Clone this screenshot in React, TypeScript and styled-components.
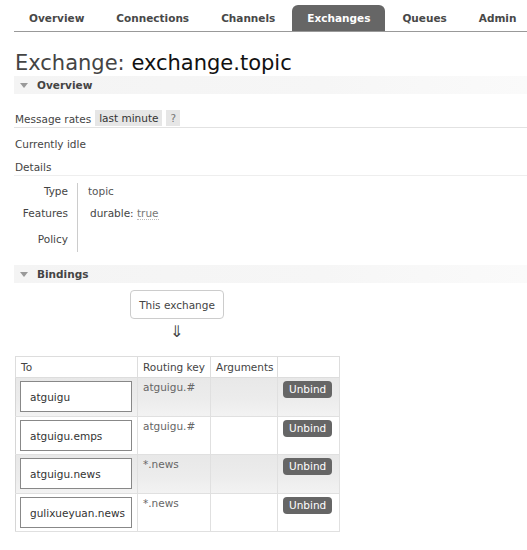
import React, { FC } from 'react';
import styled, { createGlobalStyle } from 'styled-components';

const GlobalStyle = createGlobalStyle`
    html, body {
        margin: 0;
        padding: 0;
        background: #fff;
    }
    body {
        font-family: Verdana, 'DejaVu Sans', sans-serif;
        font-size: 10.5px;
        color: #444;
    }
`;

const Page = styled.div`
    width: 527px;
    padding-left: 14px;
    box-sizing: border-box;
`;

const Nav = styled.ul`
    display: flex;
    gap: 2px;
    margin: 0;
    padding: 5px 0 0 0;
    list-style: none;
    border-bottom: 1px solid #999;
`;

const NavItem = styled.li<{ $active?: boolean }>`
    height: 26px;
    line-height: 27px;
    padding: 0 15px;
    font-weight: bold;
    white-space: nowrap;
    color: ${(p) => (p.$active ? '#fff' : '#484848')};
    background: ${(p) => (p.$active ? '#666' : 'transparent')};
    border-radius: 6px 6px 0 0;
`;

const Title = styled.h1`
    margin: 19px 0 0 1px;
    font-size: 21px;
    font-weight: normal;
    line-height: 25px;
    color: #444;
    & span {
        color: #111;
    }
`;

const SectionHeader = styled.h2<{ $top?: number }>`
    display: flex;
    align-items: center;
    height: 18px;
    margin: ${(p) => p.$top ?? 0}px 0 0 0;
    padding-left: 6px;
    font-size: 10.5px;
    font-weight: bold;
    color: #444;
    background: linear-gradient(to right, #f4f4f4 0%, #f6f6f6 60%, #fafafa 100%);
`;

const Triangle = styled.span`
    width: 0;
    height: 0;
    margin-right: 9px;
    border-left: 4px solid transparent;
    border-right: 4px solid transparent;
    border-top: 5px solid #999;
`;

const RateRow = styled.div`
    display: flex;
    align-items: center;
    gap: 4px;
    margin-top: 16px;
    padding-left: 1px;
    height: 17px;
    border-bottom: 1px solid #e2e2e2;
`;

const Pill = styled.span<{ $muted?: boolean }>`
    display: inline-block;
    height: 16px;
    line-height: 17px;
    padding: 0 4px;
    margin-top: -1px;
    background: #e6e6e6;
    color: ${(p) => (p.$muted ? '#777' : '#333')};
`;

const Line = styled.p`
    margin: 10px 0 0 1px;
    line-height: 13px;
`;

const SubHeading = styled.p`
    margin: 10px 0 0 0;
    padding: 0 0 1px 1px;
    line-height: 13px;
    border-bottom: 1px solid #eee;
`;

const DetailsTable = styled.table`
    margin-top: 7px;
    border-collapse: collapse;
    line-height: 13px;
`;

const DetailLabel = styled.th<{ $h: number }>`
    width: 54px;
    height: ${(p) => p.$h}px;
    padding: 0 9px 0 0;
    text-align: right;
    vertical-align: middle;
    font-weight: normal;
    color: #444;
`;

const DetailValue = styled.td`
    border-left: 1px solid #ccc;
    padding: 0 0 0 10px;
    color: #555;
`;

const FeatureName = styled.span`
    margin-left: 2px;
    color: #444;
`;

const Dotted = styled.span`
    color: #777;
    border-bottom: 1px dotted #bbb;
`;

const Flow = styled.div`
    display: flex;
    flex-direction: column;
    align-items: flex-start;
    padding-left: 116px;
    margin-top: 7px;
`;

const ExchangeBox = styled.div`
    width: 92px;
    height: 27px;
    line-height: 28px;
    text-align: center;
    border: 1px solid #ccc;
    border-radius: 4px;
    color: #444;
`;

const Arrow = styled.div`
    margin: 3px 0 0 40px;
    font-size: 16px;
    line-height: 20px;
    color: #444;
`;

const Bindings = styled.table`
    margin: 14px 0 0 1px;
    border-collapse: collapse;
    border: 1px solid #d6d6d6;
    width: 325px;
    table-layout: fixed;
`;

const HeadCell = styled.th`
    height: 20px;
    padding: 0 5px;
    text-align: left;
    font-weight: normal;
    color: #444;
    border: 1px solid #ddd;
    background: #fff;
`;

const Row = styled.tr<{ $alt: boolean }>`
    height: 38.5px;
    background: ${(p) => (p.$alt ? 'linear-gradient(to bottom, #e8e8e8 0%, #ececec 55%, #f3f3f3 100%)' : '#fff')};
`;

const Cell = styled.td`
    padding: 3px 4px 0 5px;
    vertical-align: top;
    border-left: 1px solid #e0e0e0;
    border-right: 1px solid #e0e0e0;
    border-bottom: 1px solid #e0e0e0;
    color: #666;
`;

const EndpointCell = styled.td`
    padding: 3px 0 3px 4px;
    vertical-align: top;
    border-bottom: 1px solid #e0e0e0;
`;

const Endpoint = styled.div`
    box-sizing: border-box;
    width: 112px;
    height: 31px;
    line-height: 31px;
    padding-left: 9px;
    border: 1px solid #888;
    background: #fff;
    color: #333;
    white-space: nowrap;
`;

const UnbindButton = styled.button`
    height: 17px;
    padding: 0 6px;
    margin: 0;
    border: none;
    border-radius: 4px;
    background: #666;
    color: #fff;
    font-family: inherit;
    font-size: 10.5px;
    line-height: 17px;
`;

type Binding = { to: string; key: string };

const bindings: Binding[] = [
    { to: 'atguigu', key: 'atguigu.#' },
    { to: 'atguigu.emps', key: 'atguigu.#' },
    { to: 'atguigu.news', key: '*.news' },
    { to: 'gulixueyuan.news', key: '*.news' },
];

const tabs = ['Overview', 'Connections', 'Channels', 'Exchanges', 'Queues', 'Admin'];

const App: FC = () => {
    return (
        <Page>
            <GlobalStyle />
            <Nav>
                {tabs.map((t) => (
                    <NavItem key={t} $active={t === 'Exchanges'}>
                        {t}
                    </NavItem>
                ))}
            </Nav>
            <Title>
                Exchange: <span>exchange.topic</span>
            </Title>
            <SectionHeader>
                <Triangle />
                Overview
            </SectionHeader>
            <RateRow>
                Message rates <Pill>last minute</Pill>
                <Pill $muted>?</Pill>
            </RateRow>
            <Line>Currently idle</Line>
            <SubHeading>Details</SubHeading>
            <DetailsTable>
                <tbody>
                    <tr>
                        <DetailLabel $h={17}>Type</DetailLabel>
                        <DetailValue>topic</DetailValue>
                    </tr>
                    <tr>
                        <DetailLabel $h={26}>Features</DetailLabel>
                        <DetailValue>
                            <FeatureName>durable:</FeatureName> <Dotted>true</Dotted>
                        </DetailValue>
                    </tr>
                    <tr>
                        <DetailLabel $h={26}>Policy</DetailLabel>
                        <DetailValue />
                    </tr>
                </tbody>
            </DetailsTable>
            <SectionHeader $top={13}>
                <Triangle />
                Bindings
            </SectionHeader>
            <Flow>
                <ExchangeBox>This exchange</ExchangeBox>
                <Arrow>⇓</Arrow>
            </Flow>
            <Bindings>
                <colgroup>
                    <col style={{ width: 122 }} />
                    <col style={{ width: 73 }} />
                    <col style={{ width: 67 }} />
                    <col style={{ width: 62 }} />
                </colgroup>
                <thead>
                    <tr>
                        <HeadCell>To</HeadCell>
                        <HeadCell>Routing key</HeadCell>
                        <HeadCell>Arguments</HeadCell>
                        <HeadCell />
                    </tr>
                </thead>
                <tbody>
                    {bindings.map((b, i) => (
                        <Row key={b.to} $alt={i % 2 === 0}>
                            <EndpointCell>
                                <Endpoint>{b.to}</Endpoint>
                            </EndpointCell>
                            <Cell>{b.key}</Cell>
                            <Cell />
                            <Cell>
                                <UnbindButton>Unbind</UnbindButton>
                            </Cell>
                        </Row>
                    ))}
                </tbody>
            </Bindings>
        </Page>
    );
};

export default App;
